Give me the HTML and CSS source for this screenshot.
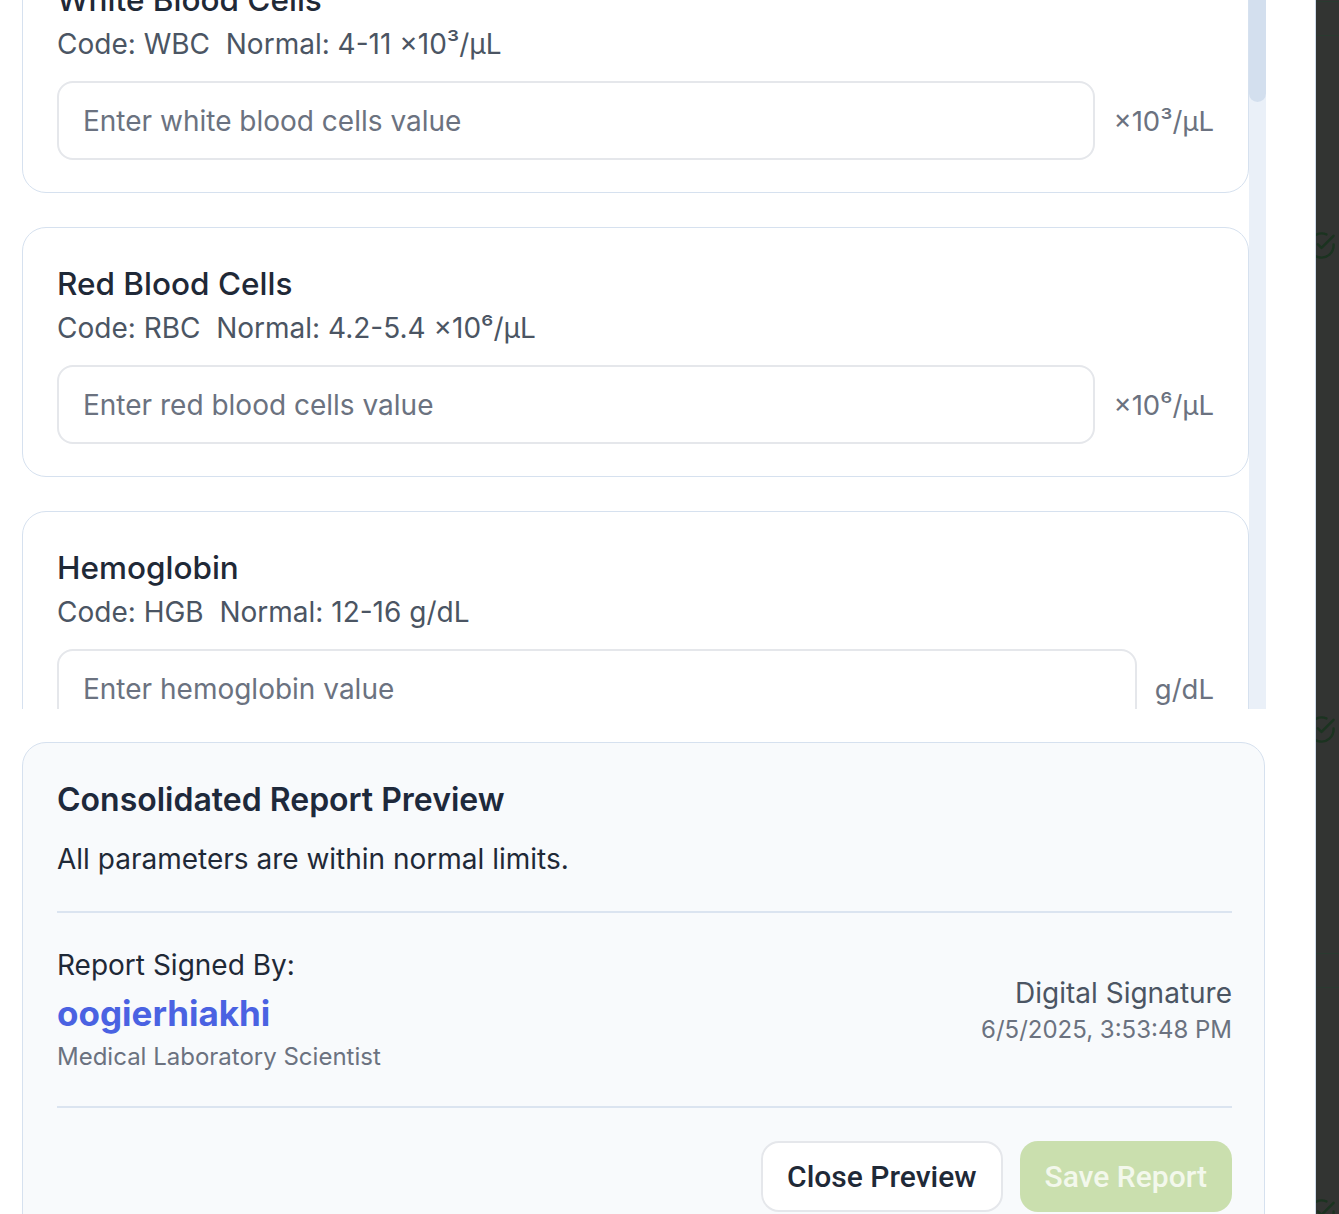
FILE: index.html
```html
<!DOCTYPE html>
<html lang="en">
<head>
<meta charset="utf-8">
<title>Consolidated Report Preview</title>
<link rel="stylesheet" href="styles.css">
</head>
<body>
<div class="screen">
  <main class="modal">
    <div class="scroll">
      <div class="cards">
        <section class="card">
          <h3 class="card-title">White Blood Cells</h3>
          <p class="card-meta">Code: WBC&nbsp; Normal: 4-11 ×10³/µL</p>
          <div class="field">
            <div class="input">Enter white blood cells value</div>
            <span class="unit">×10³/µL</span>
          </div>
        </section>
        <section class="card">
          <h3 class="card-title">Red Blood Cells</h3>
          <p class="card-meta">Code: RBC&nbsp; Normal: 4.2-5.4 ×10⁶/µL</p>
          <div class="field">
            <div class="input">Enter red blood cells value</div>
            <span class="unit">×10⁶/µL</span>
          </div>
        </section>
        <section class="card">
          <h3 class="card-title">Hemoglobin</h3>
          <p class="card-meta">Code: HGB&nbsp; Normal: 12-16 g/dL</p>
          <div class="field">
            <div class="input">Enter hemoglobin value</div>
            <span class="unit">g/dL</span>
          </div>
        </section>
      </div>
      <div class="scrollbar"><div class="thumb"></div></div>
    </div>

    <section class="preview">
      <h2 class="preview-title">Consolidated Report Preview</h2>
      <p class="preview-text">All parameters are within normal limits.</p>
      <div class="divider"></div>
      <div class="sign-row">
        <div class="signer">
          <div class="signed-label">Report Signed By:</div>
          <div class="signed-name">oogierhiakhi</div>
          <div class="signed-role">Medical Laboratory Scientist</div>
        </div>
        <div class="sig-meta">
          <div class="sig-label">Digital Signature</div>
          <div class="sig-date">6/5/2025, 3:53:48 PM</div>
        </div>
      </div>
      <div class="divider"></div>
      <div class="actions">
        <button class="btn btn-outline">Close Preview</button>
        <button class="btn btn-save" disabled>Save Report</button>
      </div>
    </section>
  </main>

  <aside class="backdrop">
    <div class="bg-row"></div>
    <svg class="bg-icon first" viewBox="0 0 24 24" fill="none" stroke="currentColor" stroke-width="2" stroke-linecap="round" stroke-linejoin="round"><path d="M22 11.08V12a10 10 0 1 1-5.93-9.14"/><path d="m9 11 3 3L22 4"/></svg>
    <svg class="bg-icon second" viewBox="0 0 24 24" fill="none" stroke="currentColor" stroke-width="2" stroke-linecap="round" stroke-linejoin="round"><path d="M22 11.08V12a10 10 0 1 1-5.93-9.14"/><path d="m9 11 3 3L22 4"/></svg>
    <div class="bg-row second"></div>
    <svg class="bg-icon third" viewBox="0 0 24 24" fill="none" stroke="currentColor" stroke-width="2" stroke-linecap="round" stroke-linejoin="round"><path d="M22 11.08V12a10 10 0 1 1-5.93-9.14"/><path d="m9 11 3 3L22 4"/></svg>
  </aside>
</div>
</body>
</html>
```
FILE: styles.css
```css
* { box-sizing: border-box; }

html, body {
  margin: 0;
  padding: 0;
  height: 100%;
  overflow: hidden;
  background: #ffffff;
}

body {
  font-family: Inter, "Noto Sans", sans-serif;
  color: #1f2937;
}

.screen {
  display: flex;
  width: 1339px;
  height: 1214px;
  overflow: hidden;
}

.modal {
  width: 1316px;
  flex: none;
  background: #ffffff;
  border-right: 1px solid #cfdbea;
  padding-left: 22px;
}

/* ---------- scrolling list of parameters ---------- */
.scroll {
  display: flex;
  width: 1244px;
  height: 709px;
  overflow: hidden;
}

.cards {
  flex: 1;
  display: flex;
  flex-direction: column;
  gap: 34px;
  margin-top: -57px;
}

.card {
  flex: none;
  height: 250px;
  border: 1px solid #d6e1ef;
  border-radius: 24px;
  padding: 34px 34px 33px 34px;
  background: #ffffff;
}

.card-title {
  margin: 0;
  font-size: 31.5px;
  line-height: 44px;
  font-weight: 500;
  color: #1f2937;
}

.card-meta {
  margin: 3px 0 0 0;
  font-size: 28px;
  line-height: 39px;
  color: #4b5563;
}

.field {
  display: flex;
  align-items: center;
  gap: 18px;
  margin-top: 17px;
}

.input {
  flex: 1;
  height: 79px;
  border: 2px solid #e5e7eb;
  border-radius: 16px;
  padding-left: 24px;
  display: flex;
  align-items: center;
  font-size: 28px;
  color: #6b7280;
  background: #ffffff;
}

.unit {
  font-size: 27.5px;
  color: #6b7280;
  white-space: nowrap;
}

.scrollbar {
  width: 17px;
  flex: none;
  background: #eaf0f8;
}

.thumb {
  height: 102px;
  background: #d3dfee;
  border-radius: 0 0 9px 9px;
}

/* ---------- preview panel ---------- */
.preview {
  width: 1243px;
  margin-top: 33px;
  border: 1px solid #d6e1ef;
  border-radius: 24px;
  background: #f8fafc;
  padding: 35px 32px 40px 34px;
}

.preview-title {
  margin: 0;
  font-size: 32px;
  line-height: 44px;
  font-weight: 600;
  color: #1e293b;
}

.preview-text {
  margin: 18px 0 0 0;
  font-size: 28px;
  line-height: 39px;
  color: #1f2937;
}

.divider {
  height: 2px;
  background: #dbe4f0;
  margin-top: 32px;
}

.sign-row {
  display: flex;
  justify-content: space-between;
  align-items: center;
  padding-top: 33px;
}

.signed-label {
  font-size: 28px;
  line-height: 39px;
  color: #1f2937;
}

.signed-name {
  margin-top: 4px;
  font-size: 35px;
  line-height: 48px;
  font-weight: 700;
  color: #4a62e2;
}

.signed-role {
  margin-top: 3px;
  font-size: 24px;
  line-height: 34px;
  color: #6b7280;
}

.sig-meta {
  text-align: right;
}

.sig-label {
  font-size: 28px;
  line-height: 39px;
  color: #4b5563;
}

.sig-date {
  font-size: 24px;
  line-height: 34px;
  color: #6b7280;
}

.actions {
  display: flex;
  justify-content: flex-end;
  gap: 17px;
  margin-top: 33px;
}

.btn {
  font-family: Roboto, "Liberation Sans", sans-serif;
  font-size: 30px;
  font-weight: 500;
  height: 71px;
  border-radius: 18px;
  padding: 0 24px;
  cursor: pointer;
}

.btn-outline {
  background: #ffffff;
  color: #1f2937;
  border: 2px solid #e5e7eb;
}

.btn-save {
  background: #cadfae;
  color: #f3f8ec;
  border: none;
  padding: 0 25px;
}

/* ---------- dimmed page behind the modal ---------- */
.backdrop {
  flex: 1;
  background: #323432;
  display: flex;
  flex-direction: column;
  overflow: hidden;
}

.bg-row {
  flex: none;
  height: 35px;
  margin-top: 1px;
  border-top: 1px solid #2a3a30;
  border-bottom: 1px solid #2a3a30;
}

.bg-row.second {
  margin-top: 209px;
}

.bg-icon {
  flex: none;
  width: 29px;
  height: 29px;
  margin-left: -9px;
  color: #1b3320;
}

.bg-icon.first { margin-top: 195px; }
.bg-icon.second { margin-top: 455px; }
.bg-icon.third { margin-top: 210px; }
```
